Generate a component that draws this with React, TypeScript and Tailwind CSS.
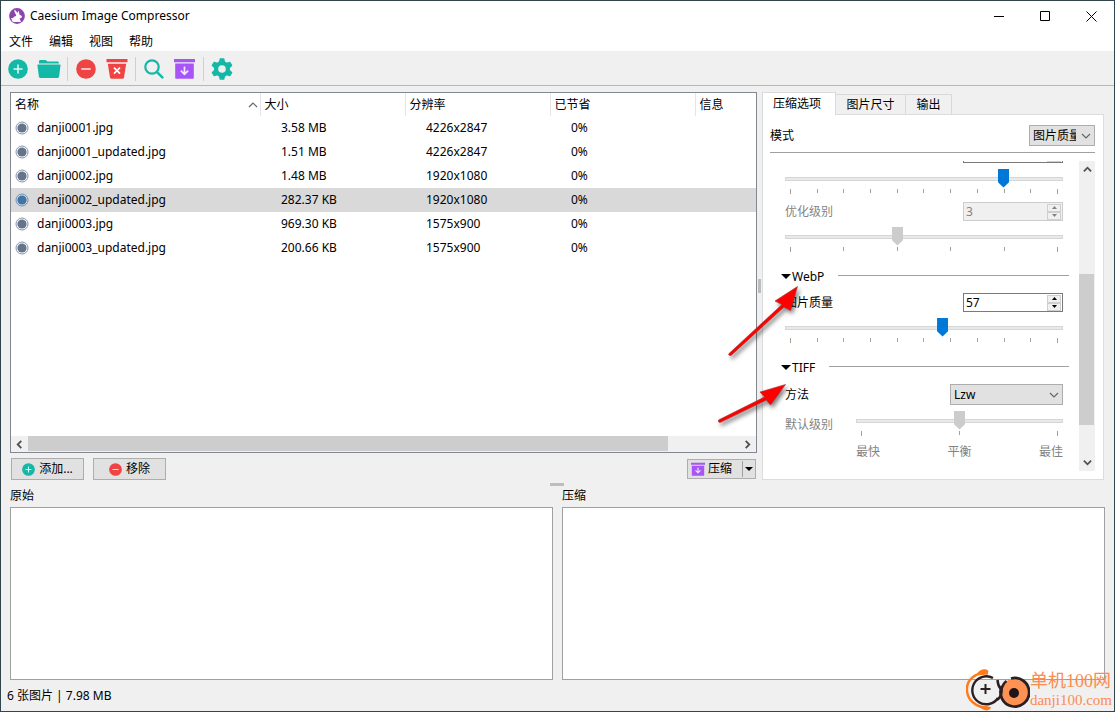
import React, { useState } from 'react'

const files = [
  { name: 'danji0001.jpg', size: '3.58 MB', res: '4226x2847' },
  { name: 'danji0001_updated.jpg', size: '1.51 MB', res: '4226x2847' },
  { name: 'danji0002.jpg', size: '1.48 MB', res: '1920x1080' },
  { name: 'danji0002_updated.jpg', size: '282.37 KB', res: '1920x1080' },
  { name: 'danji0003.jpg', size: '969.30 KB', res: '1575x900' },
  { name: 'danji0003_updated.jpg', size: '200.66 KB', res: '1575x900' },
]

function AppLogo() {
  return (
    <svg width="16" height="16" viewBox="0 0 16 16" aria-hidden="true">
      <circle cx="8" cy="8" r="7.9" fill="#8e44ad" />
      <path d="M5.300 1.800c1.200.6 2.400 1.800 3 3.200l1-2.200c.9 1.200 1.200 2.600 1 3.800 1.300.4 2.300 1.300 2.700 2.400-.4.9-1.400 1.300-2.500 1.300.6.700.7 1.300.6 2l1.100 1-1 .8H4.800c-1.500-.3-2.300-1.500-1.900-2.800-.8-.1-1-.9-.4-1.300.6-.3 1 0 1.300.3.700-1.200 2-1.800 3.300-2.200-.2-.6-.1-1 .1-1.400C6 5.700 5.300 3.800 5.300 1.800z" fill="#fff" />
    </svg>
  )
}

function PlusIcon({ size }: { size: number }) {
  return (
    <svg width={size} height={size} viewBox="0 0 20 20" aria-hidden="true">
      <circle cx="10" cy="10" r="9.8" fill="#14b8a6" />
      <path d="M10 5.5v9M5.5 10h9" stroke="#d9fbf5" strokeWidth="1.6" />
    </svg>
  )
}

function MinusIcon({ size }: { size: number }) {
  return (
    <svg width={size} height={size} viewBox="0 0 20 20" aria-hidden="true">
      <circle cx="10" cy="10" r="9.8" fill="#ef4444" />
      <path d="M5.3 10h9.4" stroke="#fde0e0" strokeWidth="1.6" />
    </svg>
  )
}

function FolderIcon() {
  return (
    <svg width="24" height="20" viewBox="0 0 24 20" aria-hidden="true" fill="#14b8a6">
      <path d="M2 4.4V2.3C2 1.6 2.6 1 3.3 1h5.2c.8 0 1.4 1.2 2.1 1.6h9.9c.8 0 1.4.6 1.4 1.3v.5z" />
      <path d="M.8 5.6h22.3c.3 0 .5.3.4.6l-1.4 11.6c-.1.7-.7 1.2-1.4 1.2H3.3c-.7 0-1.3-.5-1.4-1.2L.4 6.2c0-.3.1-.6.4-.6z" />
    </svg>
  )
}

function ClearIcon() {
  return (
    <svg width="22" height="20" viewBox="0 0 22 20" aria-hidden="true">
      <path d="M.5 0h21v3.2H.5zM1.8 4.8h18.4L18 18.6c-.1.8-.7 1.2-1.4 1.2H5.4c-.7 0-1.3-.4-1.4-1.2z" fill="#ef4444" />
      <path d="m8 8.6 6 6m0-6-6 6" stroke="#fff" strokeWidth="1.7" />
    </svg>
  )
}

function CompressIcon({ size }: { size: number }) {
  return (
    <svg width={size} height={size} viewBox="0 0 21 21" aria-hidden="true">
      <path d="M0 1h21v3.2H0zM1.2 5.6h18.6v14.2c0 .6-.4 1-1 1H2.200c-.6 0-1-.4-1-1z" fill="#a855f7" />
      <path d="M10.500 8.500v7.500M6.800 12.600l3.700 3.600 3.700-3.600" stroke="#f3e8ff" strokeWidth="1.7" fill="none" />
    </svg>
  )
}

function SearchIcon() {
  return (
    <svg width="20" height="20" viewBox="0 0 20 20" aria-hidden="true" fill="none" stroke="#14b8a6">
      <circle cx="8" cy="8" r="6.700" strokeWidth="2.200" />
      <path d="m12.800 12.800 6.300 6.300" strokeWidth="2.400" />
    </svg>
  )
}

function GearIcon() {
  return (
    <svg width="22" height="22" viewBox="0 0 22 22" aria-hidden="true">
      <g fill="#14b8a6">
        <circle cx="11" cy="11" r="8" />
        {[0, 60, 120].map((a) => (
          <path key={a} transform={`rotate(${a} 11 11)`} d="M8.600.800Q8.700.200 9.300.200h3.400q.6 0 .7.600l.7 3.200v14l-.7 3.200q-.1.600-.7.600H9.300q-.6 0-.7-.6L7.900 18V4z" />
        ))}
      </g>
      <circle cx="11" cy="11" r="3.800" fill="#efefef" />
    </svg>
  )
}

function Chevron({ dir, bold = false }: { dir: 'up' | 'down' | 'left' | 'right'; bold?: boolean }) {
  const paths = {
    up: 'M1 7l4-4 4 4',
    down: 'M1 3l4 4 4-4',
    left: 'M7 1 3 5l4 4',
    right: 'M3 1l4 4-4 4',
  }
  return (
    <svg width={bold ? 9 : 10} height={bold ? 9 : 10} viewBox="0 0 10 10" fill="none" stroke={bold ? '#505050' : '#666'} strokeWidth={bold ? 2 : 1.200} aria-hidden="true">
      <path d={paths[dir]} />
    </svg>
  )
}

function Ticks({ count }: { count: number }) {
  return (
    <div className="mt-px flex h-[5px] justify-between px-[5px]" aria-hidden="true">
      {Array.from({ length: count }, (_, i) => (
        <span key={i} className={i === 0 || i === count - 1 ? 'h-[5px] w-px bg-[#a5a294]' : 'h-1 w-px bg-[#a5a294]'} />
      ))}
    </div>
  )
}

function Slider(props: { label: string; min: number; max: number; value: number; disabled?: boolean; onChange?: (n: number) => void }) {
  return (
    <input
      type="range"
      aria-label={props.label}
      min={props.min}
      max={props.max}
      value={props.value}
      disabled={props.disabled}
      onChange={(e) => props.onChange?.(Number(e.target.value))}
      className="m-0 block h-[19px] w-full appearance-none bg-transparent [&::-webkit-slider-runnable-track]:h-1 [&::-webkit-slider-runnable-track]:border [&::-webkit-slider-runnable-track]:border-[#d6d6d6] [&::-webkit-slider-runnable-track]:bg-[#e7eaea] [&::-webkit-slider-thumb]:-mt-[9px] [&::-webkit-slider-thumb]:h-[19px] [&::-webkit-slider-thumb]:w-[11px] [&::-webkit-slider-thumb]:appearance-none [&::-webkit-slider-thumb]:bg-[#0078d7] [&::-webkit-slider-thumb]:[clip-path:polygon(0_0,100%_0,100%_72%,50%_100%,0_72%)] disabled:[&::-webkit-slider-thumb]:bg-[#cccccc]"
    />
  )
}

function SpinBox(props: { id: string; value: number; disabled?: boolean; label?: string; onChange?: (n: number) => void }) {
  const tone = props.disabled ? 'border-[#cccccc] bg-[#f0f0f0] text-[#838383]' : 'border-[#7a7a7a] bg-white text-black'
  const arrow = props.disabled ? '#838383' : '#000'
  const button = 'flex h-[8px] w-[14px] items-center justify-center border border-[#cfcfcf] bg-[#f0f0f0]'
  return (
    <div className={`flex h-[19px] w-[100px] shrink-0 items-center border pr-px ${tone}`}>
      <input
        id={props.id}
        aria-label={props.label}
        type="number"
        value={props.value}
        disabled={props.disabled}
        onChange={(e) => props.onChange?.(Number(e.target.value))}
        className="h-full min-w-0 flex-1 bg-transparent px-[2px] outline-none [appearance:textfield] [&::-webkit-inner-spin-button]:appearance-none"
      />
      <div className="flex flex-col">
        <button className={button} disabled={props.disabled} aria-label="+" onClick={() => props.onChange?.(props.value + 1)}>
          <svg width="5" height="3" viewBox="0 0 5 3" className="shrink-0"><path d="M2.500 0 5 3H0z" fill={arrow} /></svg>
        </button>
        <button className={button} disabled={props.disabled} aria-label="-" onClick={() => props.onChange?.(props.value - 1)}>
          <svg width="5" height="3" viewBox="0 0 5 3" className="shrink-0"><path d="M0 0h5L2.500 3z" fill={arrow} /></svg>
        </button>
      </div>
    </div>
  )
}

function SectionHeader({ title }: { title: string }) {
  return (
    <div className="-mr-[6px] -ml-1 mt-[15px] mb-[9px] flex h-[17px] items-center">
      <button className="flex items-center gap-px pt-[2px]">
        <svg width="10" height="5" viewBox="0 0 10 5" aria-hidden="true"><path d="M0 0h10L5 5z" /></svg>
        {title}
      </button>
      <span className="ml-[14px] h-px flex-1 bg-[#a0a0a0]" />
    </div>
  )
}

function DropDown({ id, value, options, className }: { id: string; value: string; options: string[]; className: string }) {
  return (
    <div className={`relative ${className}`}>
      <select id={id} defaultValue={value} className="block h-[21px] w-full appearance-none overflow-hidden border border-[#adadad] bg-[#e1e1e1] pr-[18px] pl-[3px] leading-[19px] [text-overflow:clip]">
        {options.map((o) => <option key={o}>{o}</option>)}
      </select>
      <span className="pointer-events-none absolute top-[6px] right-1"><Chevron dir="down" /></span>
    </div>
  )
}

function ToolButton({ label, children }: { label: string; children: React.ReactNode }) {
  return <button aria-label={label} className="flex h-6 w-[31px] items-center justify-center">{children}</button>
}

function FileTable() {
  const [selected, setSelected] = useState(3)
  return (
    <div className="flex flex-1 flex-col border border-[#828790] bg-white">
      <table className="w-full table-fixed border-collapse text-left">
        <colgroup>
          <col className="w-[249px]" />
          <col className="w-[145px]" />
          <col className="w-[145px]" />
          <col className="w-[145px]" />
          <col />
        </colgroup>
        <thead>
          <tr className="h-[23px]">
            {['名称', '大小', '分辨率', '已节省', '信息'].map((h, i) => (
              <th key={h} className={i < 4 ? 'border-r border-[#e5e5e5] p-0 pl-1 font-normal' : 'p-0 pl-1 font-normal'}>
                <span className="flex items-center justify-between pr-[2px]">
                  {h}
                  {i === 0 && <Chevron dir="up" />}
                </span>
              </th>
            ))}
          </tr>
        </thead>
        <tbody>
          {files.map((f, i) => (
            <tr key={f.name} onClick={() => setSelected(i)} className={i === selected ? 'h-6 bg-[#d9d9d9]' : 'h-6'}>
              <td className="p-0 pl-1">
                <span className="flex items-center gap-2">
                  <svg width="14" height="14" viewBox="0 0 14 14" aria-hidden="true">
                    <circle cx="7" cy="7" r="6" fill="none" stroke={i === selected ? '#6b93bb' : '#8592a6'} strokeWidth="1" />
                    <circle cx="7" cy="7" r="4.600" fill={i === selected ? '#4374a6' : '#64748b'} />
                  </svg>
                  {f.name}
                </span>
              </td>
              <td className="p-0 pl-[21px]">{f.size}</td>
              <td className="p-0 pl-[21px]">{f.res}</td>
              <td className="p-0 pl-[21px]">0%</td>
              <td />
            </tr>
          ))}
        </tbody>
      </table>
      <div className="mt-auto flex h-4 bg-[#f0f0f0]">
        <button aria-label="向左滚动" className="flex w-[17px] items-center justify-center"><Chevron dir="left" bold /></button>
        <div className="flex-1"><div className="h-[15px] w-[90%] bg-[#cdcdcd]" /></div>
        <button aria-label="向右滚动" className="flex w-[17px] items-center justify-center"><Chevron dir="right" bold /></button>
      </div>
    </div>
  )
}

function OptionsPanel() {
  const [png, setPng] = useState(80)
  const [webp, setWebp] = useState(57)
  return (
    <section className="flex w-[342px] shrink-0 flex-col">
      <div role="tablist" className="flex items-end">
        <button role="tab" aria-selected="true" className="relative z-10 -mb-px h-[23px] w-[74px] border border-b-0 border-[#d9d9d9] bg-white pr-1">压缩选项</button>
        <button role="tab" aria-selected="false" className="h-5 w-[70px] border border-b-0 border-l-0 border-[#d9d9d9]">图片尺寸</button>
        <button role="tab" aria-selected="false" className="h-5 w-[46px] border border-b-0 border-l-0 border-[#d9d9d9]">输出</button>
      </div>
      <div className="flex flex-col border border-[#dcdcdc] bg-white pt-[10px] pr-2 pb-2 pl-[7px]">
        <div className="flex items-center justify-between border-b border-[#a0a0a0] pb-[6px]">
          <label htmlFor="mode">模式</label>
          <DropDown id="mode" value="图片质量" options={['图片质量', '文件大小']} className="w-[66px]" />
        </div>
        <div className="mt-2 flex">
          <div className="flex-1 pr-4 pl-[15px]">
            <div className="flex h-[2px] items-end justify-end overflow-hidden">
              <SpinBox id="png" label="PNG" value={png} onChange={setPng} />
            </div>
            <div className="mt-[6px]">
              <Slider label="PNG" min={0} max={100} value={png} onChange={setPng} />
              <Ticks count={11} />
            </div>
            <div className="mt-2 mb-[6px] flex items-center justify-between text-[#838383]">
              <label htmlFor="level">优化级别</label>
              <SpinBox id="level" value={3} disabled />
            </div>
            <Slider label="优化级别" min={1} max={6} value={3} disabled />
            <Ticks count={6} />

            <SectionHeader title="WebP" />
            <div className="mb-[6px] flex items-center justify-between">
              <label htmlFor="webp">图片质量</label>
              <SpinBox id="webp" value={webp} onChange={setWebp} />
            </div>
            <Slider label="WebP" min={0} max={100} value={webp} onChange={setWebp} />
            <Ticks count={11} />

            <SectionHeader title="TIFF" />
            <div className="mb-[6px] flex items-center justify-between">
              <label htmlFor="method">方法</label>
              <DropDown id="method" value="Lzw" options={['Uncompressed', 'Lzw', 'Deflate', 'Packbits']} className="w-[113px]" />
            </div>
            <div className="flex text-[#838383]">
              <span className="w-[71px] pt-[6px]">默认级别</span>
              <div className="flex-1">
                <Slider label="默认级别" min={0} max={2} value={1} disabled />
                <Ticks count={3} />
                <div className="mt-2 flex justify-between"><span>最快</span><span>平衡</span><span>最佳</span></div>
              </div>
            </div>
          </div>
          <div className="flex h-[310px] w-4 flex-col items-center bg-[#f0f0f0]">
            <button aria-label="向上滚动" className="flex h-[17px] items-center"><Chevron dir="up" bold /></button>
            <div className="mt-24 mr-px h-[151px] w-[15px] bg-[#cdcdcd]" />
            <button aria-label="向下滚动" className="mt-auto flex h-[17px] items-center"><Chevron dir="down" bold /></button>
          </div>
        </div>
      </div>
    </section>
  )
}

function Arrows() {
  return (
    <svg className="pointer-events-none absolute top-[269px] left-[699px] drop-shadow-[2px_3px_2px_rgba(0,0,0,0.5)]" width="110" height="160" viewBox="0 0 110 160" fill="#f00" stroke="#a03030" strokeWidth="0.6" aria-hidden="true">
      <path d="M97.500 16.500 90.500 40.500 84 37 31 85.500q-2 .5-2.500-1.500L82 34.500 75 31z" />
      <path d="M85.500 114.500 70.500 135 66.500 130 20 152.500q-2 0-1.500-2.500L64.500 127 60 122z" />
    </svg>
  )
}

function Watermark() {
  return (
    <div className="pointer-events-none absolute right-[2px] bottom-0 flex items-center font-['Liberation_Serif','Noto_Sans_CJK_SC',serif] text-[#fb8c52]">
      <svg width="64" height="42" viewBox="0 0 64 42" fill="none" aria-hidden="true">
        <path d="M22 4.500C8 3 0 12 1 22c1 9 8 16 21 17" stroke="#ff7a1a" strokeWidth="2.400" />
        <path d="M11 4.500C14 0 20-1 22.500 2l-1 3-6 1zM13 37c3 4 8 6 11 3l1-2-6-1z" fill="#ff7a1a" />
        <path d="M27 9A14 14 0 1 0 32 29" stroke="#2a2024" strokeWidth="2.400" />
        <path d="M19.500 15v10m-5-5h10" stroke="#2a2024" strokeWidth="2" />
        <circle cx="48" cy="24" r="14" fill="#ff9252" />
        <path d="M45 9.500A14.300 14.300 0 1 1 36 17" stroke="#2a2024" strokeWidth="2.800" />
        <path d="M31.500 11c.5 5 2 8 4 9 1-3 2-6 5-8M31 31c4-3 5-7 4.500-11" stroke="#2a2024" strokeWidth="2.600" />
        <circle cx="48" cy="24" r="5" fill="#1d1518" />
      </svg>
      <div className="flex flex-col">
        <span className="text-[18px] leading-[20px]">单机100网</span>
        <span className="text-[15px] leading-[18px]">danji100.com</span>
      </div>
    </div>
  )
}

export default function App() {
  return (
    <div className="relative flex min-h-screen flex-col border border-[#33454c] bg-[#f0f0f0] font-['Noto_Sans','Noto_Sans_CJK_SC',sans-serif] text-[12px] leading-[16px] text-black">
      <header className="bg-white">
        <div className="flex h-[30px] items-center">
          <div className="ml-2 flex flex-1 items-center gap-[5px]"><AppLogo /><h1>Caesium Image Compressor</h1></div>
          <button aria-label="最小化" className="flex w-[46px] justify-center"><svg width="11" height="11" stroke="#000" fill="none"><path d="M0 5.500h10" /></svg></button>
          <button aria-label="最大化" className="flex w-[46px] justify-center"><svg width="11" height="11" stroke="#000" fill="none"><path d="M.5.500h9v9h-9z" /></svg></button>
          <button aria-label="关闭" className="flex w-[46px] justify-center"><svg width="11" height="11" stroke="#000" fill="none"><path d="m.5.500 10 10m0-10-10 10" /></svg></button>
        </div>
        <nav className="flex h-[21px] items-center gap-4 border-b border-[#f0f0f0] pt-px pl-2">
          {['文件', '编辑', '视图', '帮助'].map((m) => <button key={m}>{m}</button>)}
        </nav>
      </header>
      <div className="flex h-[34px] items-center border-b border-[#b8b8b8] pl-px">
        <ToolButton label="添加"><PlusIcon size={20} /></ToolButton>
        <ToolButton label="打开文件夹"><FolderIcon /></ToolButton>
        <span className="mr-[2px] ml-[3px] h-6 w-px bg-[#cfcfcf]" />
        <ToolButton label="移除"><MinusIcon size={20} /></ToolButton>
        <ToolButton label="清空"><ClearIcon /></ToolButton>
        <span className="mr-[2px] ml-[3px] h-6 w-px bg-[#cfcfcf]" />
        <ToolButton label="预览"><SearchIcon /></ToolButton>
        <ToolButton label="压缩"><CompressIcon size={21} /></ToolButton>
        <span className="mr-[2px] ml-[3px] h-6 w-px bg-[#cfcfcf]" />
        <ToolButton label="设置"><GearIcon /></ToolButton>
      </div>
      <main className="flex flex-1 flex-col pt-[6px] pr-[9px] pl-[9px]">
        <div className="flex pr-px">
          <section className="flex min-w-0 flex-1 flex-col">
            <FileTable />
            <div className="mt-[5px] flex h-[22px] items-center px-px">
              <button className="flex h-[22px] w-[73px] items-center justify-center gap-1 border border-[#adadad] bg-[#e1e1e1]"><PlusIcon size={13} />添加...</button>
              <button className="ml-[9px] flex h-[22px] w-[73px] items-center justify-center gap-1 border border-[#adadad] bg-[#e1e1e1]"><MinusIcon size={13} />移除</button>
              <div className="ml-auto flex h-5 w-[69px] border border-[#adadad] bg-[#e1e1e1]">
                <button className="flex flex-1 items-center gap-[3px] pl-[3px]"><CompressIcon size={14} />压缩</button>
                <button aria-label="更多" className="my-px flex w-[13px] items-center justify-center border-l border-[#a0a0a0]"><svg width="8" height="4"><path d="M0 0h8L4 4z" /></svg></button>
              </div>
            </div>
          </section>
          <div className="flex w-[5px] items-center justify-center"><span className="h-[14px] w-[3px] bg-[#bdbdbd]" /></div>
          <OptionsPanel />
        </div>
        <div className="flex h-2 items-center justify-center pr-[2px]"><span className="h-[3px] w-[14px] bg-[#bdbdbd]" /></div>
        <div className="flex flex-1 gap-[9px]">
          {['原始', '压缩'].map((t) => (
            <section key={t} className="flex flex-1 flex-col">
              <h2>{t}</h2>
              <div className="mt-[3px] flex-1 border border-[#a0a0a0] bg-white" />
            </section>
          ))}
        </div>
      </main>
      <footer className="flex h-[31px] items-center pt-px pl-[6px]">6 张图片 | 7.98 MB</footer>
      <Arrows />
      <Watermark />
    </div>
  )
}
